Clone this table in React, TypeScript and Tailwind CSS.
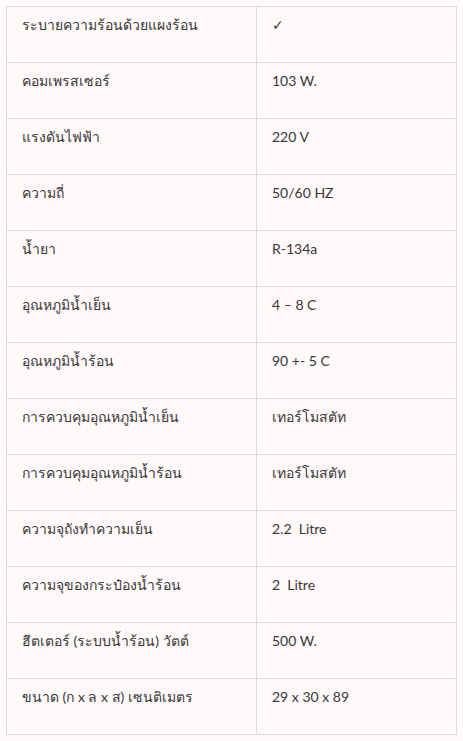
import React from 'react';

const rows: [string, string][] = [
    ['ระบายความร้อนด้วยแผงร้อน', '✓'],
    ['คอมเพรสเซอร์', '103 W.'],
    ['แรงดันไฟฟ้า', '220 V'],
    ['ความถี่', '50/60 HZ'],
    ['น้ำยา', 'R-134a'],
    ['อุณหภูมิน้ำเย็น', '4 – 8 C'],
    ['อุณหภูมิน้ำร้อน', '90 +- 5 C'],
    ['การควบคุมอุณหภูมิน้ำเย็น', 'เทอร์โมสตัท'],
    ['การควบคุมอุณหภูมิน้ำร้อน', 'เทอร์โมสตัท'],
    ['ความจุถังทำความเย็น', '2.2  Litre'],
    ['ความจุของกระป๋องน้ำร้อน', '2  Litre'],
    ['ฮีตเตอร์ (ระบบน้ำร้อน) วัตต์', '500 W.'],
    ['ขนาด (ก x ล x ส) เซนติเมตร', '29 x 30 x 89'],
];

const App: React.FC = () => {
    return (
        <div className="min-h-[741px] bg-[#fff9f9] pt-[6px] pl-[6px] font-['Lato','Noto_Sans',sans-serif] text-[14px] leading-6 text-[#383838]">
            <table className="w-[451px] border-collapse">
                <tbody>
                    {rows.map(([label, value], i) => (
                        <tr key={i} className="h-[56px]">
                            <td className="w-[250px] border border-[#dedada] align-top pt-[6px] pl-[15px] pr-2 whitespace-pre">
                                {label}
                            </td>
                            <td className="border border-[#dedada] align-top pt-[6px] pl-[15px] pr-2 whitespace-pre">
                                {value}
                            </td>
                        </tr>
                    ))}
                </tbody>
            </table>
        </div>
    );
};

export default App;
